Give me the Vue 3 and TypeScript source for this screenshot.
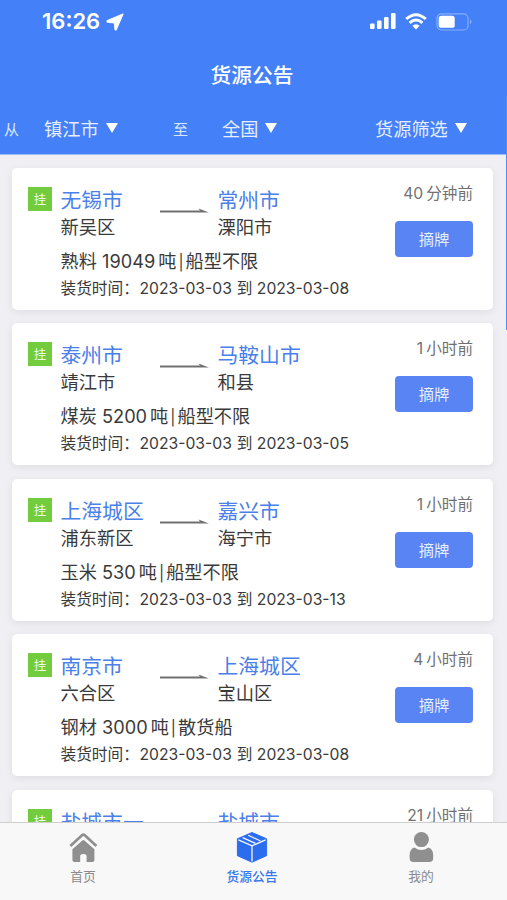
<script setup lang="ts">
interface Cargo {
  from: string
  fromArea: string
  to: string
  toArea: string
  goods: string
  amount: string
  ship: string
  start: string
  end: string
  ago: string
  agoUnit: string
}

const list: Cargo[] = [
  { from: '无锡市', fromArea: '新吴区', to: '常州市', toArea: '溧阳市', goods: '熟料', amount: '19049', ship: '船型不限', start: '2023-03-03', end: '2023-03-08', ago: '40', agoUnit: '分钟前' },
  { from: '泰州市', fromArea: '靖江市', to: '马鞍山市', toArea: '和县', goods: '煤炭', amount: '5200', ship: '船型不限', start: '2023-03-03', end: '2023-03-05', ago: '1', agoUnit: '小时前' },
  { from: '上海城区', fromArea: '浦东新区', to: '嘉兴市', toArea: '海宁市', goods: '玉米', amount: '530', ship: '船型不限', start: '2023-03-03', end: '2023-03-13', ago: '1', agoUnit: '小时前' },
  { from: '南京市', fromArea: '六合区', to: '上海城区', toArea: '宝山区', goods: '钢材', amount: '3000', ship: '散货船', start: '2023-03-03', end: '2023-03-08', ago: '4', agoUnit: '小时前' },
  { from: '盐城市一', fromArea: '', to: '盐城市', toArea: '', goods: '', amount: '', ship: '', start: '', end: '', ago: '21', agoUnit: '小时前' },
]
</script>

<template>
  <div class="screen">
    <header class="header">
      <div class="status">
        <span class="clock">16:26</span>
        <svg class="locate" viewBox="0 0 18 18"><path d="M17 1 L10.4 16.3 Q9.4 17.8 9 16 L8.4 9.8 L1.8 9.2 Q.2 8.6 1.6 7.6 Z" fill="#fff" stroke="#fff" stroke-width="1.2" stroke-linejoin="round" /></svg>
        <span class="spacer"></span>
        <svg class="signal" viewBox="0 0 26 17"><g fill="#fff"><rect x="0" y="10.5" width="4.6" height="5.5" rx="1.2" /><rect x="7" y="7.5" width="4.6" height="8.5" rx="1.2" /><rect x="14" y="4" width="4.6" height="12" rx="1.2" /><rect x="21" y="0" width="4.6" height="16" rx="1.2" /></g></svg>
        <svg class="wifi" viewBox="0 0 22 17"><g fill="none" stroke="#fff" stroke-width="2.9"><path d="M1.2 6 Q11 -2.6 20.8 6" /><path d="M4.6 9.8 Q11 4.2 17.4 9.8" /></g><path d="M7.3 12.8 Q11 9.6 14.7 12.8 L11 16.6 Z" fill="#fff" /></svg>
        <svg class="battery" viewBox="0 0 37 18"><rect x="1" y=".8" width="31" height="16.2" rx="4.5" fill="none" stroke="#86adfb" stroke-width="1.2" /><rect x="2.7" y="2.8" width="16" height="12" rx="2.6" fill="#fff" /><path d="M34 6.3 Q37.3 8.8 34 11.5 Z" fill="#86adfb" /></svg>
      </div>
      <h1 class="title">货源公告</h1>
      <div class="filters">
        <span class="label">从</span>
        <span class="pick start">镇江市<i class="caret"></i></span>
        <span class="label to">至</span>
        <span class="pick end">全国<i class="caret"></i></span>
        <span class="pick filter">货源筛选<i class="caret"></i></span>
      </div>
    </header>

    <main class="list">
      <article v-for="(c, i) in list" :key="i" class="card">
        <span class="tag">挂</span>
        <div class="info">
          <div class="route">
            <div class="place">
              <div class="city">{{ c.from }}</div>
              <div v-if="c.fromArea" class="area">{{ c.fromArea }}</div>
            </div>
            <svg class="arrow" viewBox="0 0 50 6"><path d="M0 2.6 H40 L38.5 .6 L49 4.5 H0 Z" fill="#707070" /></svg>
            <div class="place">
              <div class="city">{{ c.to }}</div>
              <div v-if="c.toArea" class="area">{{ c.toArea }}</div>
            </div>
          </div>
          <div v-if="c.goods" class="goods">{{ c.goods }} <span class="amount">{{ c.amount }}</span>吨<span class="bar">|</span>{{ c.ship }}</div>
          <div v-if="c.start" class="time"><span class="time-label">装货时间：</span><span class="date">{{ c.start }}</span><span class="until">到</span><span class="date">{{ c.end }}</span></div>
        </div>
        <div class="side">
          <div class="ago"><span class="num">{{ c.ago }}</span>{{ c.agoUnit }}</div>
          <button v-if="c.goods" class="take">摘牌</button>
        </div>
      </article>
    </main>
    <i class="scrollbar"></i>

    <nav class="tabs">
      <div class="tab">
        <svg viewBox="0 0 32 32"><path d="M3.4 15 L15 4.2 Q16.4 3 17.8 4.2 L29.4 15" fill="none" stroke="#8f8f8f" stroke-width="2.7" stroke-linejoin="round" /><path d="M5.4 18.2 L15.4 9.4 Q16.4 8.6 17.4 9.4 L27.4 18.2 V29 Q27.4 31 25.4 31 H19.6 V25.2 Q19.6 23 16.4 23 Q13.2 23 13.2 25.2 V31 H7.4 Q5.4 31 5.4 29 Z" fill="#8f8f8f" /></svg>
        <span>首页</span>
      </div>
      <div class="tab active">
        <svg viewBox="0 0 32 32"><path d="M16 1.5 L30.6 7.8 V24.7 L16 31.2 L1.4 24.7 V7.8 Z" fill="#2c6df0" stroke="#2c6df0" stroke-linejoin="round" /><g fill="none" stroke="#f8f8f8" stroke-width="1.3"><path d="M2.4 8.8 L16 14.9 L29.6 8.8 M16 14.9 V30.5" /><path d="M6.6 6.6 L19.4 12.4 M12.2 4.2 L24.6 10" stroke-width="1.2" /></g></svg>
        <span>货源公告</span>
      </div>
      <div class="tab">
        <svg viewBox="0 0 32 32"><circle cx="16.4" cy="8.6" r="7.5" fill="#8f8f8f" /><path d="M9.4 16.4 Q16.4 21.6 23.4 16.4 Q28.2 18 28.2 24.5 V27 Q28.2 31 24.4 31 H8.4 Q4.6 31 4.6 27 V24.5 Q4.6 18 9.4 16.4 Z" fill="#8f8f8f" /></svg>
        <span>我的</span>
      </div>
    </nav>
  </div>
</template>

<style>
body {
  margin: 0;
  overflow: hidden;
}
</style>

<style scoped>
.screen {
  position: relative;
  display: flex;
  flex-direction: column;
  width: 507px;
  height: 900px;
  overflow: hidden;
  background: #efeff4;
  color: #3a3a3a;
  font-family: Inter, "Noto Sans CJK SC", sans-serif;
}
.header {
  flex: none;
  height: 155px;
  background: #4480f8;
  border-bottom: 1px solid #9dbdf9;
  box-sizing: border-box;
  color: #fff;
}
.status {
  display: flex;
  align-items: center;
  height: 43px;
  padding: 0 34px 0 42px;
}
.clock {
  font-size: 22px;
  line-height: 43px;
  font-weight: 600;
  width: 58px;
  white-space: nowrap;
}
.locate { width: 18px; height: 18px; margin-left: 6px; }
.spacer { flex: 1; }
.signal { width: 26px; height: 17px; }
.wifi { width: 22px; height: 17px; margin-left: 9px; }
.battery { width: 37px; height: 18px; margin-left: 9px; }
.title {
  margin: 17px 0 0;
  font-size: 20.7px;
  line-height: 32px;
  font-weight: 500;
  text-align: center;
  padding-right: 3px;
}
.filters {
  display: flex;
  align-items: center;
  margin-top: 20px;
  height: 32px;
  padding-left: 4px;
  white-space: nowrap;
}
.label { width: 16px; font-size: 15px; color: #dce8ff; }
.pick {
  display: flex;
  align-items: center;
  gap: 7px;
  font-size: 18.2px;
  color: #e6eeff;
}
.start { margin-left: 24px; width: 129px; }
.end { margin-left: 33px; width: 153px; }
.caret {
  width: 0;
  height: 0;
  border: 6.5px solid transparent;
  border-top: 10px solid #fff;
  border-bottom: 0;
}
.list {
  flex: 1;
  min-height: 0;
  overflow: hidden;
  display: flex;
  flex-direction: column;
  gap: 13.4px;
  padding: 13px 14px 0 12px;
}
.card {
  flex: none;
  display: flex;
  height: 142px;
  box-sizing: border-box;
  padding: 19px 20px 0 16px;
  border-radius: 5px;
  background: #fff;
  box-shadow: 0 2px 8px rgba(0, 0, 0, .08);
}
.tag {
  flex: none;
  width: 24px;
  height: 24px;
  background: #72cc3d;
  color: #effbe9;
  font-size: 12.5px;
  line-height: 25px;
  text-align: center;
}
.info { flex: 1; margin-left: 8.5px; white-space: nowrap; }
.route { display: flex; height: 59px; }
.place { width: 99px; }
.city { font-size: 20.8px; line-height: 28px; color: #4b7fe9; }
.area { font-size: 18.3px; line-height: 24px; }
.arrow { width: 50px; height: 6px; margin: 21px 8px 0 0; }
.goods { font-size: 18.2px; line-height: 30px; }
.amount { margin-right: 3px; }
.bar { margin: 0 2px; font-size: 15.5px; }
.time { display: flex; font-size: 15.7px; line-height: 22px; }
.time-label { width: 79px; }
.until { width: 15px; margin: 0 5px; }
.side {
  width: 98px;
  display: flex;
  flex-direction: column;
  align-items: flex-end;
  white-space: nowrap;
}
.ago { height: 34px; font-size: 15.6px; line-height: 13px; color: #717171; }
.num { margin-right: 3px; }
.take {
  width: 78px;
  height: 36px;
  padding: 0 0 2px;
  border: 0;
  border-radius: 4px;
  background: #5984f3;
  color: #e6eeff;
  font: inherit;
  font-size: 15.3px;
}
.scrollbar {
  position: absolute;
  right: 0;
  top: 96px;
  width: 1px;
  height: 234px;
  background: #4d91f5;
}
.tabs {
  flex: none;
  display: flex;
  height: 78px;
  box-sizing: border-box;
  border-top: 1px solid #cfcfd2;
  background: #f8f8f8;
}
.tab {
  flex: 1;
  display: flex;
  flex-direction: column;
  align-items: center;
  padding-top: 8px;
  padding-right: 3px;
  color: #8b8b8b;
  font-size: 12.8px;
}
.tab svg { width: 32px; height: 32px; }
.tab span { line-height: 20px; margin-top: 3.5px; }
.active { color: #3976ec; font-weight: 500; }
</style>
